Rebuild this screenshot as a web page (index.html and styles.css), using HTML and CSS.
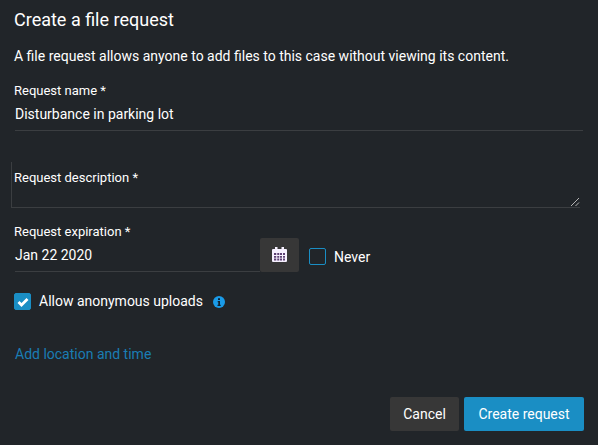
FILE: index.html
```html
<!DOCTYPE html>
<html lang="en">
<head>
    <meta charset="UTF-8">
    <title>Create a file request</title>
    <link rel="stylesheet" href="styles.css">
</head>
<body>
    <div class="dialog">
        <h1 class="title">Create a file request</h1>
        <p class="intro">A file request allows anyone to add files to this case without viewing its content.</p>

        <div class="field name-field">
            <label class="label">Request name *</label>
            <div class="value">Disturbance in parking lot</div>
        </div>

        <div class="description">
            <label class="label">Request description *</label>
            <svg class="resize" width="10" height="10" viewBox="0 0 10 10">
                <path d="M1 9L9 1M5.500 9L9 5.500" stroke="#b5b5b5" stroke-width="1" fill="none"/>
            </svg>
        </div>

        <div class="expiry">
            <div class="field date-field">
                <label class="label">Request expiration *</label>
                <div class="value">Jan 22 2020</div>
            </div>
            <button class="cal-btn">
                <svg width="15" height="15" viewBox="0 0 15 15">
                    <path fill="#f6f0ff" d="M1 2h2V0h2.500v2h4V0H12v2h2a1 1 0 0 1 1 1v11a1 1 0 0 1-1 1H1a1 1 0 0 1-1-1V3a1 1 0 0 1 1-1z"/>
                    <path fill="#5c3f73" d="M2 6h2.250v2H2zM5.250 6H7.250v2h-2zM8 6h2v2H8zM11 6h2v2h-2zM2 9h2.250v1.750H2zM5.250 9H7.250v1.750h-2zM8 9h2v1.750H8zM11 9h2v1.750h-2zM2 11.500h2.250V13.500H2zM5.250 11.500H7.250v2h-2zM8 11.500h2v2H8zM11 11.500h2v2h-2z"/>
                </svg>
            </button>
            <span class="box"></span>
            <span class="check-text">Never</span>
        </div>

        <div class="anon">
            <span class="box checked">
                <svg width="12" height="10" viewBox="0 0 12 10">
                    <path d="M1.500 5L4.500 8L10.500 2" stroke="#fff" stroke-width="2.800" fill="none"/>
                </svg>
            </span>
            <span class="check-text">Allow anonymous uploads</span>
            <svg class="info" width="12" height="12" viewBox="0 0 12 12">
                <circle cx="6" cy="6" r="6" fill="#1a9be8"/>
                <path d="M5 2.300h2v1.700H5zM4.700 5h2.300v3.800h.7V10H4.500V8.800h.8V6.200h-.6z" fill="#10212e"/>
            </svg>
        </div>

        <a class="add-link" href="#">Add location and time</a>

        <div class="actions">
            <button class="btn cancel">Cancel</button>
            <button class="btn primary">Create request</button>
        </div>
    </div>
</body>
</html>
```

FILE: styles.css
```css
* {
    box-sizing: border-box;
}

html, body {
    margin: 0;
    height: 100%;
}

body {
    background: #212529;
    color: #fff;
    font-family: Roboto, "Liberation Sans", sans-serif;
    font-size: 14px;
}

.dialog {
    display: flex;
    flex-direction: column;
    height: 445px;
    padding: 9px 14px 14px;
}

.title {
    margin: 0;
    font-size: 18px;
    font-weight: 400;
    line-height: 22px;
}

.intro {
    margin: 15px 0 0;
    line-height: 20px;
}

.label {
    display: block;
    font-size: 13px;
    line-height: 16px;
}

.value {
    line-height: 20px;
    margin-top: 5px;
}

.field {
    border-bottom: 1px solid #3b3e41;
}

.name-field {
    margin: 17px 1px 0;
    height: 48px;
}

.name-field .label,
.date-field .label {
    margin-left: -1px;
}

.description {
    position: relative;
    margin: 31px 4px 0 -3px;
    height: 46px;
    padding: 8px 2px 0;
    border-left: 1px solid #3b3e41;
    border-bottom: 1px solid #3b3e41;
}

.resize {
    position: absolute;
    right: 0;
    bottom: 0;
}

.expiry {
    display: flex;
    align-items: flex-end;
    margin-top: 15px;
    padding-left: 1px;
}

.date-field {
    width: 245px;
    height: 49px;
    padding-top: 1px;
}

.cal-btn {
    display: flex;
    align-items: center;
    justify-content: center;
    width: 39px;
    height: 34px;
    padding: 0 0 2px;
    border: 0;
    border-radius: 2px;
    background: #373737;
}

.box {
    display: flex;
    align-items: center;
    justify-content: center;
    flex: none;
    width: 17px;
    height: 17px;
    border: 1px solid #1a8ec4;
    border-radius: 2px;
}

.expiry .box {
    margin: 0 0 7px 10px;
}

.expiry .check-text {
    margin: 0 0 6px 8px;
    line-height: 18px;
}

.check-text {
    line-height: 17px;
}

.anon {
    display: flex;
    align-items: center;
    margin-top: 21px;
}

.checked {
    background: #1a8ec4;
}

.anon .check-text {
    margin-left: 8px;
}

.info {
    margin: 1px 0 0 10px;
}

.add-link {
    margin: 34px 0 0 1px;
    color: #1a7db4;
    line-height: 20px;
    text-decoration: none;
}

.actions {
    display: flex;
    justify-content: flex-end;
    gap: 5px;
    margin-top: auto;
}

.btn {
    height: 34px;
    border: 0;
    border-radius: 2px;
    color: #fff;
    font-family: inherit;
    font-size: 14px;
    font-weight: 400;
}

.cancel {
    width: 69px;
    background: #373737;
}

.primary {
    width: 120px;
    background: #1a8ec4;
}
```
